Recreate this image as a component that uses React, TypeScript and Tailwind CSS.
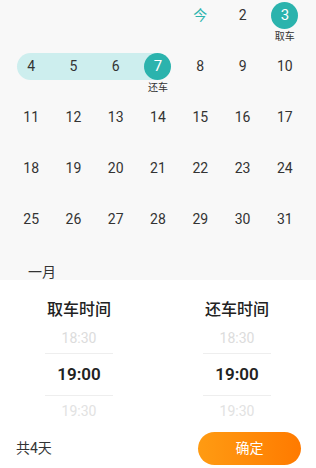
const font = { fontFamily: '"Roboto", "Noto Sans CJK SC", sans-serif' };

type Day = {
  label: string;
  kind?: "today" | "pick" | "drop" | "rangeStart" | "range";
  note?: string;
};

const weeks: Day[][] = [
  [
    { label: "" },
    { label: "" },
    { label: "" },
    { label: "" },
    { label: "今", kind: "today" },
    { label: "2" },
    { label: "3", kind: "pick", note: "取车" },
  ],
  [
    { label: "4", kind: "rangeStart" },
    { label: "5", kind: "range" },
    { label: "6", kind: "range" },
    { label: "7", kind: "drop", note: "还车" },
    { label: "8" },
    { label: "9" },
    { label: "10" },
  ],
  ["11", "12", "13", "14", "15", "16", "17"].map((label) => ({ label })),
  ["18", "19", "20", "21", "22", "23", "24"].map((label) => ({ label })),
  ["25", "26", "27", "28", "29", "30", "31"].map((label) => ({ label })),
];

function DayCell({ day }: { day: Day }) {
  const circle = day.kind === "pick" || day.kind === "drop";
  return (
    <div className="flex h-[51px] flex-col items-center">
      <div className="grid h-[27px] w-full">
        {day.kind === "rangeStart" && (
          <div className="col-start-1 row-start-1 ml-[7px] rounded-l-full bg-[#cdeeee]" />
        )}
        {day.kind === "range" && (
          <div className="col-start-1 row-start-1 bg-[#cdeeee]" />
        )}
        {day.kind === "drop" && (
          <div className="col-start-1 row-start-1 mr-[21px] bg-[#cdeeee]" />
        )}
        <div className="col-start-1 row-start-1 flex items-center justify-center">
          {circle ? (
            <span className="flex h-[27px] w-[27px] items-center justify-center rounded-full bg-[#2bb3ad] text-[15px] text-white">
              {day.label}
            </span>
          ) : (
            <span
              className={
                day.kind === "today"
                  ? "text-[14px] text-[#2bb3ad]"
                  : "text-[14px] text-[#333333]"
              }
            >
              {day.label}
            </span>
          )}
        </div>
      </div>
      {day.note && (
        <span className="mt-[2px] text-[10px] leading-[12px] text-[#333333]">
          {day.note}
        </span>
      )}
    </div>
  );
}

function TimeColumn({ title }: { title: string }) {
  return (
    <div className="flex flex-1 flex-col items-center">
      <div className="mt-[18px] h-[24px] text-[16px] leading-[24px] font-medium text-[#222222]">
        {title}
      </div>
      <div className="flex h-[31px] items-center pt-[2px] text-[14px] text-[#dcdcdc]">
        18:30
      </div>
      <div className="h-px w-[68px] bg-[#eeeeee]" />
      <div className="flex h-[41px] items-center text-[17px] font-semibold text-[#222222]">
        19:00
      </div>
      <div className="h-px w-[68px] bg-[#eeeeee]" />
      <div className="flex h-[30px] items-center text-[14px] text-[#e2e2e2]">
        19:30
      </div>
    </div>
  );
}

export default function App() {
  return (
    <div className="flex h-[468px] w-[316px] flex-col bg-[#f8f8f8]" style={font}>
      <div className="mt-[2px] grid grid-cols-7 px-[10px]">
        {weeks.map((week, w) =>
          week.map((day, i) => <DayCell key={`${w}-${i}`} day={day} />),
        )}
      </div>
      <div className="mt-[8px] h-[15px] pl-[28px] text-[14px] leading-[15px] text-[#333333]">
        一月
      </div>
      <div className="flex flex-1 flex-col bg-white">
        <div className="flex">
          <TimeColumn title="取车时间" />
          <TimeColumn title="还车时间" />
        </div>
        <div className="flex items-center justify-between pt-[6px] pr-[15px] pl-[16px]">
          <span className="text-[14px] text-[#333333]">共4天</span>
          <button className="h-[33px] w-[103px] rounded-full bg-gradient-to-r from-[#ff9b12] to-[#ff7a00] text-[14px] text-white">
            确定
          </button>
        </div>
      </div>
    </div>
  );
}
